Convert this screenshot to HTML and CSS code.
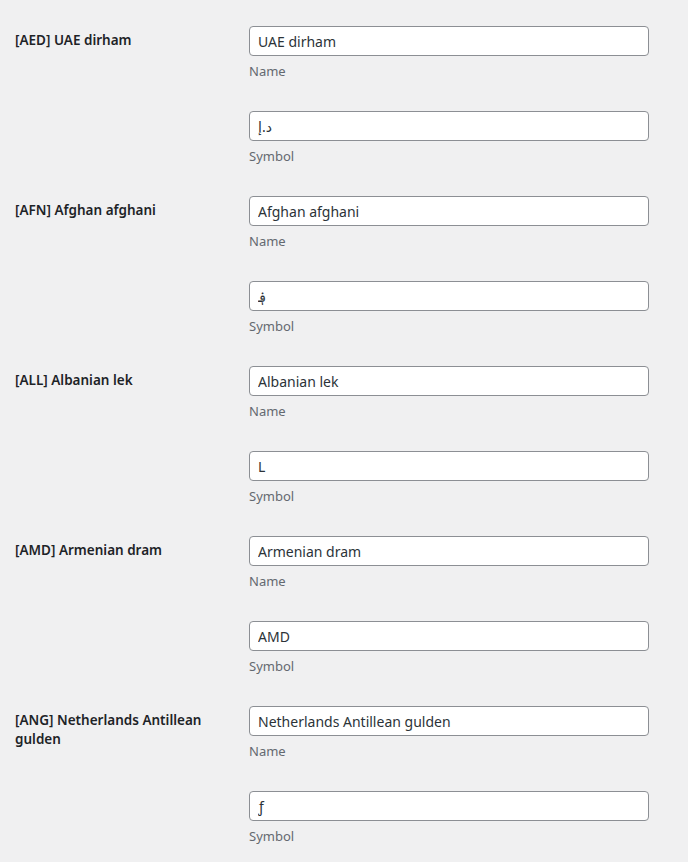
FILE: index.html
```html
<!DOCTYPE html>
<html lang="en">
<head>
<meta charset="utf-8">
<link rel="stylesheet" href="styles.css">
</head>
<body>
<div class="table">
  <div class="row">
    <div class="label">[AED] UAE dirham</div>
    <div class="fields">
      <div class="field"><input class="input" type="text" value="UAE dirham"><p class="desc">Name</p></div>
      <div class="field"><input class="input" type="text" value="د.إ"><p class="desc">Symbol</p></div>
    </div>
  </div>
  <div class="row">
    <div class="label">[AFN] Afghan afghani</div>
    <div class="fields">
      <div class="field"><input class="input" type="text" value="Afghan afghani"><p class="desc">Name</p></div>
      <div class="field"><input class="input" type="text" value="؋"><p class="desc">Symbol</p></div>
    </div>
  </div>
  <div class="row">
    <div class="label">[ALL] Albanian lek</div>
    <div class="fields">
      <div class="field"><input class="input" type="text" value="Albanian lek"><p class="desc">Name</p></div>
      <div class="field"><input class="input" type="text" value="L"><p class="desc">Symbol</p></div>
    </div>
  </div>
  <div class="row">
    <div class="label">[AMD] Armenian dram</div>
    <div class="fields">
      <div class="field"><input class="input" type="text" value="Armenian dram"><p class="desc">Name</p></div>
      <div class="field"><input class="input" type="text" value="AMD"><p class="desc">Symbol</p></div>
    </div>
  </div>
  <div class="row">
    <div class="label">[ANG] Netherlands Antillean gulden</div>
    <div class="fields">
      <div class="field"><input class="input" type="text" value="Netherlands Antillean gulden"><p class="desc">Name</p></div>
      <div class="field"><input class="input" type="text" value="ƒ"><p class="desc">Symbol</p></div>
    </div>
  </div>
</div>
</body>
</html>
```
FILE: styles.css
```css
html, body {
  margin: 0;
  padding: 0;
  background: #f0f0f1;
}
body {
  font-family: "Noto Sans", "DejaVu Sans", sans-serif;
  color: #1d2327;
  font-size: 14px;
}
.table {
  padding: 26px 0 0 15px;
}
.row {
  display: grid;
  grid-template-columns: 234px 400px;
}
.label {
  font-weight: 600;
  font-size: 13.5px;
  line-height: 19px;
  padding-top: 5px;
  padding-right: 20px;
}
.field {
  height: 85px;
}
.input {
  display: block;
  box-sizing: border-box;
  width: 400px;
  height: 30px;
  margin: 0;
  padding: 0 8px;
  border: 1px solid #8c8f94;
  border-radius: 4px;
  background: #fff;
  color: #2c3338;
  font-family: "Noto Sans", "DejaVu Sans", sans-serif;
  font-size: 14px;
  outline: none;
}
.desc {
  margin: 5px 0 0;
  font-size: 13px;
  line-height: 20px;
  color: #646970;
}
```
